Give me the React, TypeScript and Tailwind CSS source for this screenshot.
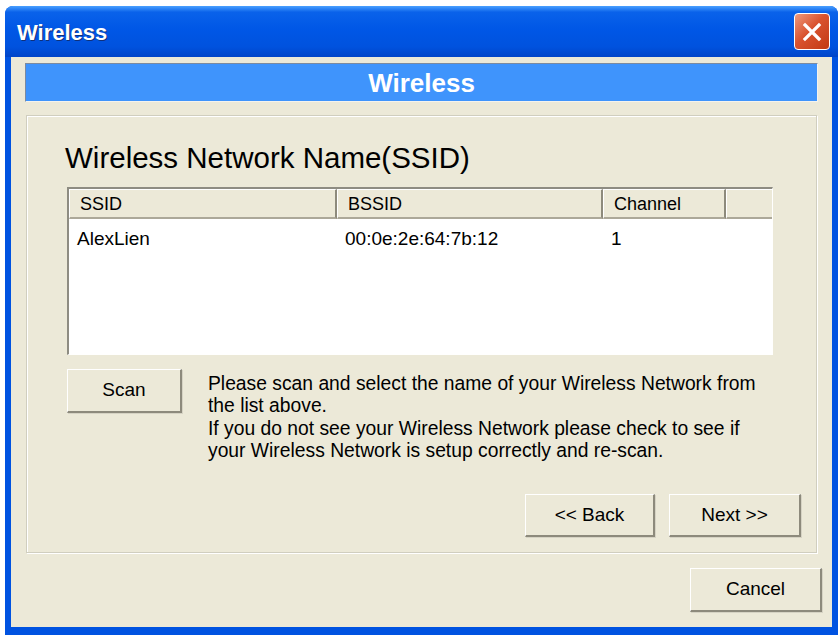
import React from 'react';

const font = "font-['Liberation_Sans',Arial,sans-serif]";

const xpButton =
  'flex items-center justify-center bg-[#ece9d8] text-black text-[19px] border-t border-l border-white border-r-2 border-b-2 border-r-[#8d8a7c] border-b-[#8d8a7c] shadow-[1px_1px_0_#d6d3c4]';

const columns = [
  { label: 'SSID', width: 'w-[268px]', value: 'AlexLien' },
  { label: 'BSSID', width: 'w-[266px]', value: '00:0e:2e:64:7b:12' },
  { label: 'Channel', width: 'w-[123px]', value: '1' },
];

const App: React.FC = () => {
  return (
    <div className={`w-[840px] h-[640px] bg-white pt-[6px] pl-[5px] ${font}`}>
      <div className="w-[833px] h-[629px] rounded-t-[8px] bg-[#0053e1] flex flex-col overflow-hidden">
        {/* title bar */}
        <div className="h-[51px] shrink-0 flex items-center justify-between pl-[12px] pr-[8px] bg-[linear-gradient(to_bottom,#4aa0ff_0%,#0a62ea_12%,#0057e6_45%,#0052de_80%,#0044c8_100%)]">
          <span className="text-white font-bold text-[22px] [text-shadow:1px_1px_0_#10307a] mt-[2px]">Wireless</span>
          <div className="w-[36px] h-[37px] rounded-[4px] border border-white bg-[linear-gradient(135deg,#ef9a7d_0%,#d9532f_45%,#c23a14_100%)] flex items-center justify-center">
            <svg width="22" height="22" viewBox="0 0 22 22">
              <path d="M4 4 L18 18 M18 4 L4 18" stroke="white" strokeWidth="3.2" strokeLinecap="square" />
            </svg>
          </div>
        </div>

        {/* client area */}
        <div className="flex-1 mx-[6px] mb-[8px] bg-[#ece9d8] flex flex-col">
          <div className="mt-[6px] mx-[14px] h-[39px] bg-[#3f94fc] border-t border-l border-[#7b8aa0] border-b border-r border-b-[#f4f3ee] border-r-[#f4f3ee] flex items-center justify-center">
            <span className="text-white font-bold text-[26px] leading-none">Wireless</span>
          </div>

          <div className="mt-[13px] ml-[15px] mr-[15px] h-[438px] border border-[#d0cebf] shadow-[inset_1px_1px_0_#fff,1px_1px_0_#fff] pl-[40px] pr-[15px] pt-[26px] flex flex-col">
            <h1 className="text-[29.5px] leading-[32px] text-black -ml-[2px]">Wireless Network Name(SSID)</h1>

            <div className="mt-[13px] w-[706px] h-[168px] bg-white border-t-2 border-l-2 border-[#8e8c82] border-b border-r border-b-[#fffffe] border-r-[#fffffe] flex flex-col">
              <div className="h-[30px] flex shrink-0">
                {columns.map((c) => (
                  <div
                    key={c.label}
                    className={`${c.width} h-full bg-[#ece9d8] border-t border-l border-white border-r-2 border-b-2 border-r-[#8d8a7c] border-b-[#aca899] pl-[10px] pt-[2px] flex items-center text-[18px]`}
                  >
                    {c.label}
                  </div>
                ))}
                <div className="flex-1 h-full bg-[#ece9d8] border-t border-l border-white border-b-2 border-b-[#aca899]" />
              </div>
              <div className="flex mt-[6px] text-[19px]">
                {columns.map((c) => (
                  <div key={c.label} className={`${c.width} pl-[8px]`}>
                    {c.value}
                  </div>
                ))}
              </div>
            </div>

            <div className="mt-[14px] flex items-start">
              <button className={`${xpButton} w-[115px] h-[44px] shrink-0`}>Scan</button>
              <p className="ml-[26px] mt-[4px] text-[19.3px] leading-[22.3px] text-black">
                Please scan and select the name of your Wireless Network from
                <br />
                the list above.
                <br />
                If you do not see your Wireless Network please check to see if
                <br />
                your Wireless Network is setup correctly and re-scan.
              </p>
            </div>

            <div className="mt-[32px] flex justify-end gap-[14px]">
              <button className={`${xpButton} w-[130px] h-[43px]`}>&lt;&lt; Back</button>
              <button className={`${xpButton} w-[132px] h-[43px]`}>Next &gt;&gt;</button>
            </div>
          </div>

          <div className="mt-[15px] mr-[10px] flex justify-end">
            <button className={`${xpButton} w-[132px] h-[44px]`}>Cancel</button>
          </div>
        </div>
      </div>
    </div>
  );
};

export default App;
